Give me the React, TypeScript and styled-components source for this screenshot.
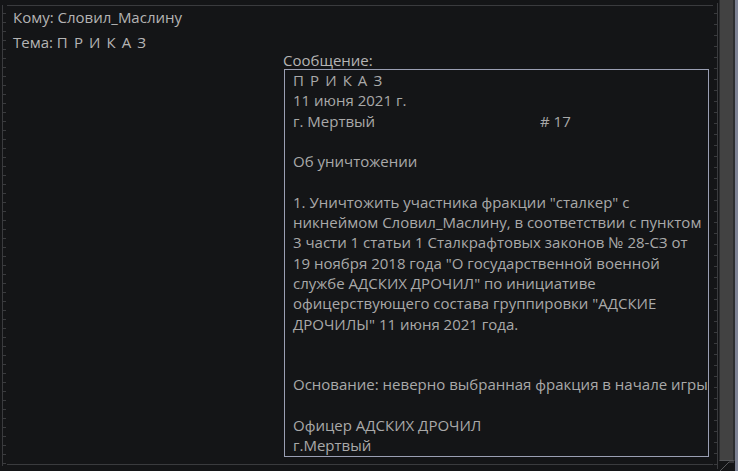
import styled, { createGlobalStyle } from 'styled-components';

const GlobalStyle = createGlobalStyle`
    html, body {
        margin: 0;
        padding: 0;
        background: #141517;
    }
`;

const Page = styled.div`
    width: 738px;
    height: 471px;
    display: flex;
    background: #141517;
    font-family: 'Open Sans', 'Noto Sans', sans-serif;
    font-size: 15px;
    color: #b4b4b4;
    overflow: hidden;
`;

const Panel = styled.div`
    position: relative;
    width: 719px;
    height: 471px;
    box-sizing: border-box;
    padding: 7px 0 0 13px;
    display: flex;
    flex-direction: column;

    /* left ruler */
    &::before {
        content: '';
        position: absolute;
        left: 2px;
        top: 5px;
        width: 4px;
        height: 461px;
        background:
            linear-gradient(#3a3b3e, #3a3b3e) left top / 1px 100% no-repeat,
            repeating-linear-gradient(to bottom, transparent 0 8px, #3a3b3e 8px 9px) right top / 3px 100% no-repeat;
    }

    /* right ruler */
    &::after {
        content: '';
        position: absolute;
        left: 714px;
        top: 3px;
        width: 4px;
        height: 466px;
        background:
            linear-gradient(#3a3b3e, #3a3b3e) right top / 1px 100% no-repeat,
            repeating-linear-gradient(to bottom, transparent 0 10px, #3a3b3e 10px 11px) left top / 3px 100% no-repeat;
    }
`;

const HLine = styled.div<{ $top: number }>`
    position: absolute;
    left: 7px;
    top: ${({ $top }) => $top}px;
    width: 706px;
    height: 1px;
    background: #3a3b3e;
`;

const Fields = styled.div`
    display: flex;
    flex-direction: column;
    gap: 4px;
`;

const Field = styled.div`
    line-height: 21px;
    white-space: pre;
`;

// the order title is typed with wide gaps between letters
const Spaced = styled.span`
    word-spacing: 2.2px;
`;

const Message = styled.div`
    margin: -1px 0 0 270px;
    display: flex;
    flex-direction: column;
`;

const Label = styled.div`
    line-height: 16px;
    height: 17px;
`;

const Box = styled.div`
    width: 425px;
    height: 388px;
    box-sizing: border-box;
    margin-left: 1px;
    border: 1px solid #9a9fb3;
    padding: 0 6px 0 8px;
    color: #a9a9a9;
    line-height: 20.3px;
`;

const Line = styled.div`
    min-height: 20.3px;
    white-space: nowrap;
`;

const Row = styled.div`
    display: flex;
    min-height: 20.3px;
`;

const Cell = styled.span<{ $w?: number }>`
    width: ${({ $w }) => ($w ? `${$w}px` : 'auto')};
    flex: none;
`;

const Scroll = styled.div`
    position: relative;
    width: 19px;
    height: 471px;
    display: flex;
`;

const Track = styled.div`
    width: 16px;
    height: 461px;
    box-sizing: border-box;
    border-left: 1px solid #2a2b2d;
    border-right: 2px solid #2c2d2f;
    border-bottom: 1px solid #56575a;
    background: #424242;
`;

const Edge = styled.div`
    width: 3px;
    height: 471px;
    background: #7d8294;
`;

const Corner = styled.svg`
    position: absolute;
    left: 0;
    bottom: 0;
`;

export default function App() {
    return (
        <Page>
            <GlobalStyle />
            <Panel>
                <HLine $top={5} />
                <HLine $top={464} />
                <Fields>
                    <Field>Кому: Словил_Маслину</Field>
                    <Field>
                        Тема: <Spaced>П Р И К А З</Spaced>
                    </Field>
                </Fields>
                <Message>
                    <Label>Сообщение:</Label>
                    <Box>
                        <Line>
                            <Spaced>П Р И К А З</Spaced>
                        </Line>
                        <Line>11 июня 2021 г.</Line>
                        <Row>
                            <Cell $w={247}>г. Мертвый</Cell>
                            <Cell># 17</Cell>
                        </Row>
                        <Line />
                        <Line>Об уничтожении</Line>
                        <Line />
                        <Line>1. Уничтожить участника фракции "сталкер" с</Line>
                        <Line>никнеймом Словил_Маслину, в соответствии с пунктом</Line>
                        <Line>3 части 1 статьи 1 Сталкрафтовых законов № 28-СЗ от</Line>
                        <Line>19 ноября 2018 года "О государственной военной</Line>
                        <Line>службе АДСКИХ ДРОЧИЛ" по инициативе</Line>
                        <Line>офицерствующего состава группировки "АДСКИЕ</Line>
                        <Line>ДРОЧИЛЫ" 11 июня 2021 года.</Line>
                        <Line />
                        <Line />
                        <Line>Основание: неверно выбранная фракция в начале игры</Line>
                        <Line />
                        <Line>Офицер АДСКИХ ДРОЧИЛ</Line>
                        <Line>г.Мертвый</Line>
                    </Box>
                </Message>
            </Panel>
            <Scroll>
                <Track />
                <Edge />
                <Corner width="19" height="11" viewBox="0 0 19 11">
                    <path d="M1 11 L10 2 L15 2" stroke="#56575a" strokeWidth="1" fill="none" />
                </Corner>
            </Scroll>
        </Page>
    );
}
